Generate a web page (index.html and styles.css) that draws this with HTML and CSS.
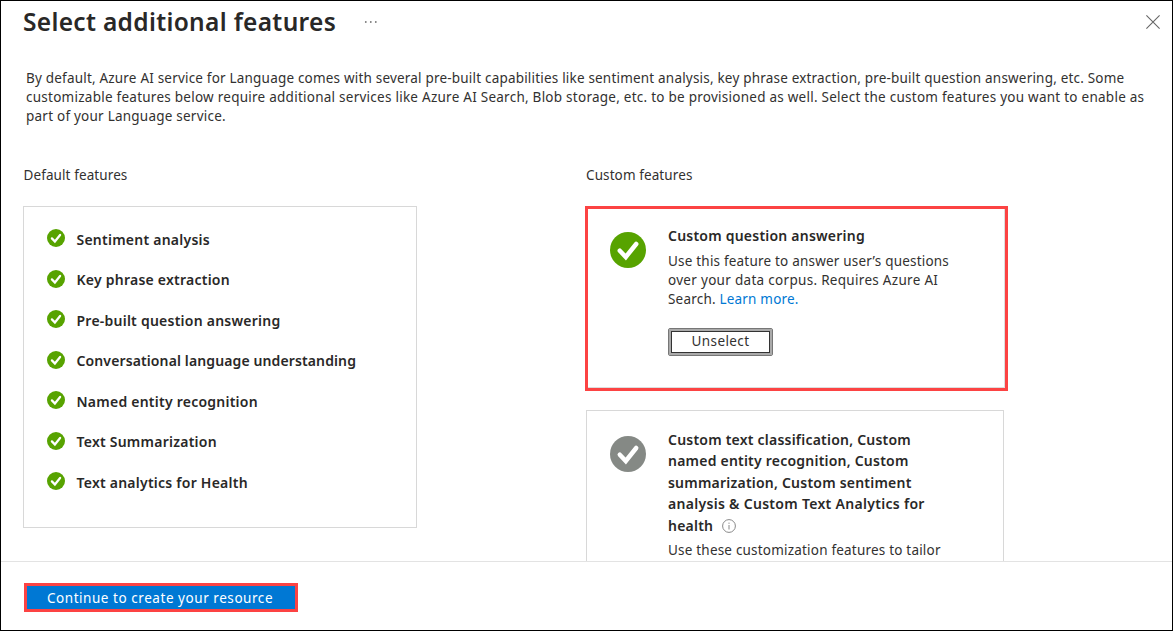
FILE: index.html
```
<!DOCTYPE html>
<html lang="en">
<head>
<meta charset="utf-8">
<title>Select additional features</title>
<link rel="stylesheet" href="styles.css">
</head>
<body>
<svg class="defs" width="0" height="0" aria-hidden="true">
  <symbol id="check" viewBox="0 0 36 36">
    <circle cx="18" cy="18" r="18" fill="currentColor"/>
    <path d="M9.8 18.7l6 6.3L26.2 12" fill="none" stroke="#fff" stroke-width="4.5" stroke-linecap="round"/>
  </symbol>
</svg>
<div class="page">
  <header class="header">
    <h1 class="title">Select additional features</h1>
    <svg class="more" width="14" height="4" viewBox="0 0 14 4" fill="#777"><circle cx="1.8" cy="2" r=".9"/><circle cx="6.8" cy="2" r=".9"/><circle cx="11.8" cy="2" r=".9"/></svg>
    <svg class="close" width="14" height="14" viewBox="0 0 14 14" fill="none" stroke="#666" stroke-width="1.1"><path d="M.4.4l13.2 13.2M13.6.4L.4 13.6"/></svg>
  </header>
  <main class="content">
    <p class="intro"><span class="l1">By default, Azure AI service for Language comes with several pre-built capabilities like sentiment analysis, key phrase extraction, pre-built question answering, etc. Some</span><br><span class="l2">customizable features below require additional services like Azure AI Search, Blob storage, etc. to be provisioned as well. Select the custom features you want to enable as</span><br><span class="l3">part of your Language service.</span></p>
    <div class="columns">
      <section class="default">
        <h2 class="label">Default features</h2>
        <ul class="list">
          <li><svg class="small"><use href="#check"/></svg><span>Sentiment analysis</span></li>
          <li><svg class="small"><use href="#check"/></svg><span>Key phrase extraction</span></li>
          <li><svg class="small"><use href="#check"/></svg><span>Pre-built question answering</span></li>
          <li class="tight"><svg class="small"><use href="#check"/></svg><span>Conversational language understanding</span></li>
          <li><svg class="small"><use href="#check"/></svg><span>Named entity recognition</span></li>
          <li><svg class="small"><use href="#check"/></svg><span>Text Summarization</span></li>
          <li><svg class="small"><use href="#check"/></svg><span>Text analytics for Health</span></li>
        </ul>
      </section>
      <section class="custom">
        <h2 class="label">Custom features</h2>
        <div class="card selected">
          <svg class="large"><use href="#check"/></svg>
          <div class="body">
            <h3 class="name">Custom question answering</h3>
            <p class="desc">Use this feature to answer user’s questions<br><span class="wide">over your data corpus. Requires Azure AI</span><br>Search. <a class="link">Learn more.</a></p>
            <button class="unselect">Unselect</button>
          </div>
        </div>
        <div class="card plain">
          <svg class="large"><use href="#check"/></svg>
          <div class="body">
            <h3 class="name">Custom text classification, Custom<br>named entity recognition, Custom<br>summarization, Custom sentiment<br><span class="wide">analysis &amp; Custom Text Analytics for</span><br>health <svg class="info" viewBox="0 0 14 14" fill="none" stroke="#888"><circle cx="7" cy="7" r="6.4"/><path d="M7 6v4.5M7 3.6v1.2"/></svg></h3>
            <p class="desc">Use these customization features to tailor</p>
          </div>
        </div>
      </section>
    </div>
  </main>
  <footer class="footer"><button class="primary">Continue to create your resource</button></footer>
</div>
</body>
</html>
```
FILE: styles.css
```
* { box-sizing: border-box; }
body { margin: 0; background: #fff; color: #323130; font: 13.5px/19px "Noto Sans", "Open Sans", sans-serif; }
h1, h2, h3, p, ul { margin: 0; padding: 0; }
.defs { display: block; }
.page { width: 1173px; height: 631px; border: 1px solid #000; display: flex; flex-direction: column; overflow: hidden; }
.header { display: flex; align-items: center; height: 42px; flex: none; padding: 0 12px 0 22px; }
.title { font-size: 24.5px; line-height: 34px; font-weight: 600; letter-spacing: .32px; color: #292827; white-space: nowrap; }
.more { margin-left: 28px; }
.close { margin-left: auto; }
.content { height: 518px; flex: none; overflow: hidden; padding-top: 26px; }
.intro { margin-left: 25px; white-space: nowrap; }
.l1 { letter-spacing: .195px; }
.l2 { letter-spacing: .253px; }
.l3 { letter-spacing: .23px; }
.columns { display: flex; margin-top: 40px; padding-left: 22px; }
.default { width: 562px; }
.label { font-size: 13.5px; line-height: 19px; font-weight: 400; letter-spacing: .1px; }
.default .label { padding-left: .5px; }
.list { list-style: none; width: 394px; height: 322px; margin-top: 21px; border: 1px solid #d8d8d8; padding: 12px 0 0 23px; }
.list li { display: flex; align-items: center; height: 40.5px; gap: 11.5px; font-weight: 600; font-size: 14px; letter-spacing: .24px; color: #292827; white-space: nowrap; }
.list .tight { letter-spacing: .12px; }
.small { width: 18px; height: 18px; color: #57a300; margin-top: -2px; }
.custom { width: 430px; }
.custom .label { margin-left: 1px; }
.card { display: flex; gap: 22.5px; white-space: nowrap; }
.selected { width: 423px; height: 185px; margin-top: 21px; border: 3px solid #fc4343; padding: 16px 0 0 21.5px; box-shadow: inset -1px -1px #ddd; }
.plain { width: 418px; height: 240px; margin: 19px 0 0 1px; border: 1px solid #d8d8d8; padding: 18px 0 0 22.5px; }
.large { width: 36px; height: 36px; margin-top: 6.5px; color: #57a300; flex: none; }
.plain .large { margin-top: 7px; color: #858985; }
.name { font-size: 14px; line-height: 21.4px; font-weight: 600; letter-spacing: .22px; color: #292827; }
.name .wide { letter-spacing: .3px; }
.desc { margin-top: 5.5px; line-height: 19px; letter-spacing: .2px; }
.desc .wide { letter-spacing: .3px; }
.plain .desc { margin-top: 5px; }
.link { color: #0078d4; }
.info { width: 14px; height: 14px; margin-left: 5px; vertical-align: -2.5px; }
.unselect { display: block; width: 105px; height: 28px; margin-top: 19px; border: 1px solid #777; border-radius: 2px; outline: 1px solid #333; outline-offset: -4px; box-shadow: inset 0 0 0 2px #aaa; background: #fff; color: inherit; font: inherit; letter-spacing: .4px; padding: 0; }
.footer { flex: 1; border-top: 1px solid #e3e3e3; padding: 21px 0 0 23px; }
.primary { display: block; width: 274px; height: 29px; padding: 1px 2px 0 0; border: 3px solid #fc4343; background: #0078d4; color: #fff; font: inherit; letter-spacing: .55px; white-space: nowrap; }
```
